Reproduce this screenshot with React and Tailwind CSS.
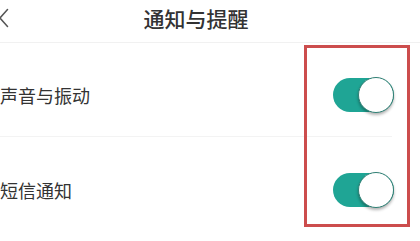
import React from 'react';

const Toggle = () => (
  <div className="relative w-[61px] h-[34px] rounded-full bg-[#1fa595]">
    <div className="absolute right-0 top-[-1px] w-[36px] h-[36px] rounded-full bg-white border border-[#2f7f74] shadow-[0_2px_3px_rgba(0,0,0,0.3)]" />
  </div>
);

const Row = ({ label, height }) => (
  <div className={`flex items-center justify-between pr-[26px] pt-[10px] ${height}`}>
    <span className="text-[18px] leading-none text-[#333333]">{label}</span>
    <Toggle />
  </div>
);

export default function App() {
  return (
    <div
      className="relative w-[420px] h-[241px] bg-white overflow-hidden"
      style={{ fontFamily: '"Noto Sans CJK SC", "Noto Sans", sans-serif' }}
    >
      <div className="relative h-[43px] border-b border-[#f1f1f1] flex items-center justify-center pr-[28px]">
        <svg className="absolute left-[-3px] top-[8px]" width="13" height="20" viewBox="0 0 13 20" fill="none">
          <path d="M10.5 1.5 L3 10 L10.5 18.5" stroke="#555555" strokeWidth="1.5" strokeLinecap="round" strokeLinejoin="round" />
        </svg>
        <span className="text-[21px] font-medium leading-none text-[#333333] -mt-[6px]">通知与提醒</span>
      </div>
      <Row label="声音与振动" height="h-[93px]" />
      <div className="h-px bg-[#f3f3f3] mr-[28px]" />
      <Row label="短信通知" height="h-[96px]" />
      <div className="absolute left-[304px] top-[45px] w-[106px] h-[182px] border-[3px] border-[#cc4d4d]" />
    </div>
  );
}
